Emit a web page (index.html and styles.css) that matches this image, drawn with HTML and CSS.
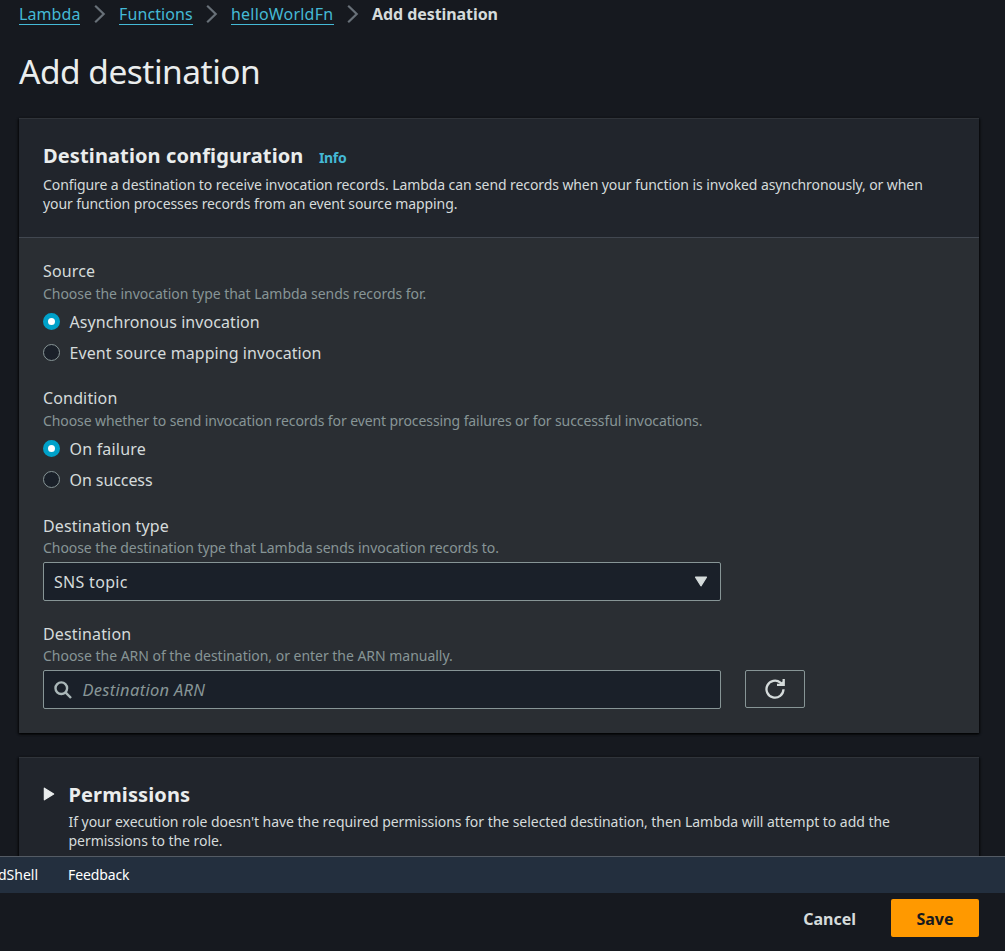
FILE: index.html
```html
<!DOCTYPE html>
<html lang="en">
<head>
<meta charset="utf-8">
<title>Add destination</title>
<link rel="stylesheet" href="styles.css">
</head>
<body>
<div class="page">
  <main class="content">
    <nav class="breadcrumbs">
      <a class="crumb crumb-lambda">Lambda</a>
      <svg class="chevron" viewBox="0 0 12 20"><path d="M1.2 1.8 9.7 10 1.2 18.2"/></svg>
      <a class="crumb crumb-functions">Functions</a>
      <svg class="chevron" viewBox="0 0 12 20"><path d="M1.2 1.8 9.7 10 1.2 18.2"/></svg>
      <a class="crumb crumb-fn">helloWorldFn</a>
      <svg class="chevron" viewBox="0 0 12 20"><path d="M1.2 1.8 9.7 10 1.2 18.2"/></svg>
      <span class="crumb-current">Add destination</span>
    </nav>
    <h1 class="title">Add destination</h1>

    <section class="panel config">
      <header class="panel-header">
        <div class="heading-row"><h2 class="heading">Destination configuration</h2><a class="info">Info</a></div>
        <p class="description">Configure a destination to receive invocation records. Lambda can send records when your function is invoked asynchronously, or when<br>your function processes records from an event source mapping.</p>
      </header>
      <div class="panel-body">
        <div class="field field-source">
          <div class="label">Source</div>
          <div class="hint hint-source">Choose the invocation type that Lambda sends records for.</div>
          <div class="options">
            <label class="option"><span class="radio selected"></span><span class="option-text">Asynchronous invocation</span></label>
            <label class="option"><span class="radio"></span><span class="option-text">Event source mapping invocation</span></label>
          </div>
        </div>
        <div class="field field-condition">
          <div class="label">Condition</div>
          <div class="hint hint-condition">Choose whether to send invocation records for event processing failures or for successful invocations.</div>
          <div class="options">
            <label class="option"><span class="radio selected"></span><span class="option-text text-failure">On failure</span></label>
            <label class="option"><span class="radio"></span><span class="option-text text-success">On success</span></label>
          </div>
        </div>
        <div class="field field-type">
          <div class="label">Destination type</div>
          <div class="hint hint-type">Choose the destination type that Lambda sends invocation records to.</div>
          <div class="control select"><span class="select-value">SNS topic</span><svg class="caret" viewBox="0 0 12 10"><path d="M1 1h10L6 9z"/></svg></div>
        </div>
        <div class="field field-destination">
          <div class="label">Destination</div>
          <div class="hint hint-destination">Choose the ARN of the destination, or enter the ARN manually.</div>
          <div class="control-row">
            <div class="control search"><svg class="search-icon" viewBox="0 0 18 18"><circle cx="7.3" cy="7.2" r="5.8"/><path d="M11.5 11.4 17 17"/></svg><span class="placeholder">Destination ARN</span></div>
            <button class="refresh"><svg viewBox="0 0 20 20"><path d="M18.5 10.3A8.5 8.5 0 1 1 15.4 3.6L17.5 5.6"/><path d="M18.7 0V5.8H12"/><path class="arrow-fill" d="M19 1.5V6H13z"/></svg></button>
          </div>
        </div>
      </div>
    </section>

    <section class="panel permissions">
      <svg class="expander" viewBox="0 0 10 12"><path d="M1 1v10l8-5z"/></svg>
      <div>
        <h2 class="heading permissions-heading">Permissions</h2>
        <p class="description permissions-text">If your execution role doesn't have the required permissions for the selected destination, then Lambda will attempt to add the<br>permissions to the role.</p>
      </div>
    </section>
  </main>
  <footer class="console-bar"><span class="shell">dShell</span><span class="feedback">Feedback</span></footer>
  <div class="actions"><button class="cancel">Cancel</button><button class="save">Save</button></div>
</div>
</body>
</html>
```

FILE: styles.css
```css
* { box-sizing: border-box; }
body { margin: 0; background: #16191f; color: #d5dbdb; font: 16px/22px "Noto Sans", sans-serif; overflow: hidden; }
h1, h2, p { margin: 0; }
button { font: inherit; padding: 0; }
svg { display: block; flex: none; }
.page { height: 951px; display: flex; flex-direction: column; }
.content { height: 856px; flex: none; padding: 3px 26px 0 19px; overflow: hidden; white-space: nowrap; }

.breadcrumbs { display: flex; align-items: center; height: 22px; }
.crumb { color: #44b9d6; line-height: 22px; height: 22px; border-bottom: 1px solid #44b9d6; letter-spacing: .1px; }
.crumb-lambda { width: 61px; }
.crumb-functions { width: 74px; }
.crumb-fn { width: 103px; letter-spacing: .2px; }
.chevron { width: 12px; height: 20px; margin: 0 13px; fill: none; stroke: #687078; stroke-width: 2.2; }
.crumb-lambda + .chevron { margin-left: 14px; }
.crumb-current { font-weight: 700; letter-spacing: -.07px; }
.title { margin-top: 24px; margin-bottom: 25px; font-size: 33.5px; line-height: 44px; font-weight: 400; color: #eaeded; letter-spacing: -.5px; }

.panel { background: #21252c; border-top: 1px solid #30343a; box-shadow: 0 1px 2px #000a, 1px 1px 2px #0008, -1px 1px 2px #0008; }
.config { height: 615px; }
.panel-header { height: 119px; padding: 23px 24px 0; border-bottom: 1px solid #414750; }
.heading-row { display: flex; align-items: baseline; gap: 15.5px; }
.heading { font-size: 20px; line-height: 27px; font-weight: 700; color: #eaeded; letter-spacing: .12px; }
.info { color: #44b9d6; font-size: 14px; font-weight: 700; letter-spacing: -.35px; }
.description { font-size: 14px; line-height: 19px; margin-top: 6px; letter-spacing: -.09px; }
.panel-body { height: 495px; padding: 22px 24px 0; background: #2a2e33; }
.label { line-height: 23px; letter-spacing: .15px; }
.hint { color: #879596; font-size: 14px; line-height: 22px; }
.hint-source { letter-spacing: -.035px; }
.hint-condition { letter-spacing: -.095px; }
.hint-type { letter-spacing: -.055px; }
.hint-destination { letter-spacing: -.025px; }
.options { padding-top: 1px; }
.option { display: flex; align-items: center; gap: 9.5px; height: 31px; }
.option-text { letter-spacing: .07px; }
.text-failure { letter-spacing: .2px; }
.text-success { letter-spacing: -.08px; }
.radio { width: 17px; height: 17px; margin-top: -1px; border: 1px solid #879596; border-radius: 50%; background: #1a2029; }
.selected { border: 5px solid #00a1c9; background: #fff; }
.field-source { padding-bottom: 19px; }
.field-condition { padding-bottom: 20px; }
.field-type { padding-bottom: 22px; }
.field-type .label, .field-destination .label { line-height: 22px; }
.control { width: 678px; height: 39px; border: 1px solid #879596; border-radius: 2px; background: #1a2029; display: flex; align-items: center; padding: 0 10px; }
.select { justify-content: space-between; margin-top: 3px; }
.select-value { letter-spacing: .3px; }
.caret { width: 14px; height: 11px; margin: -1px 2px 0 0; fill: #d5dbdb; stroke: #d5dbdb; stroke-linejoin: round; }
.control-row { display: flex; gap: 24px; margin-top: 3px; }
.search { gap: 10.5px; }
.search-icon { width: 18px; height: 18px; fill: none; stroke: #aab7b8; stroke-width: 2.4; }
.placeholder { color: #879596; font-size: 16.5px; font-style: italic; letter-spacing: .3px; }
.refresh { width: 60px; height: 38px; display: flex; align-items: center; justify-content: center; background: transparent; border: 1px solid #879596; border-radius: 2px; }
.refresh svg { width: 20px; height: 20px; fill: none; stroke: #d5dbdb; stroke-width: 2.3; }
.refresh .arrow-fill { fill: #d5dbdb; stroke: none; }

.permissions { display: flex; height: 140px; margin-top: 24px; padding: 23px 24px 0; gap: 13.5px; }
.expander { width: 12px; height: 14px; margin-top: 6px; fill: #eaeded; stroke: #eaeded; stroke-linejoin: round; }
.permissions-text { margin-top: 4px; letter-spacing: -.044px; }

.console-bar { height: 37px; flex: none; display: flex; align-items: center; gap: 30px; background: #232f3e; border-top: 1px solid #545b64; color: #fff; font-size: 14px; }
.shell { margin-left: -2px; }
.feedback { letter-spacing: -.12px; }
.actions { flex: 1; display: flex; justify-content: flex-end; gap: 35px; padding: 6px 26px 0 0; }
.cancel, .save { height: 38px; padding-top: 2px; border: 0; background: none; color: #d5dbdb; font-weight: 700; }
.save { width: 88px; color: #16191f; background: #f90; border-radius: 2px; }
```
